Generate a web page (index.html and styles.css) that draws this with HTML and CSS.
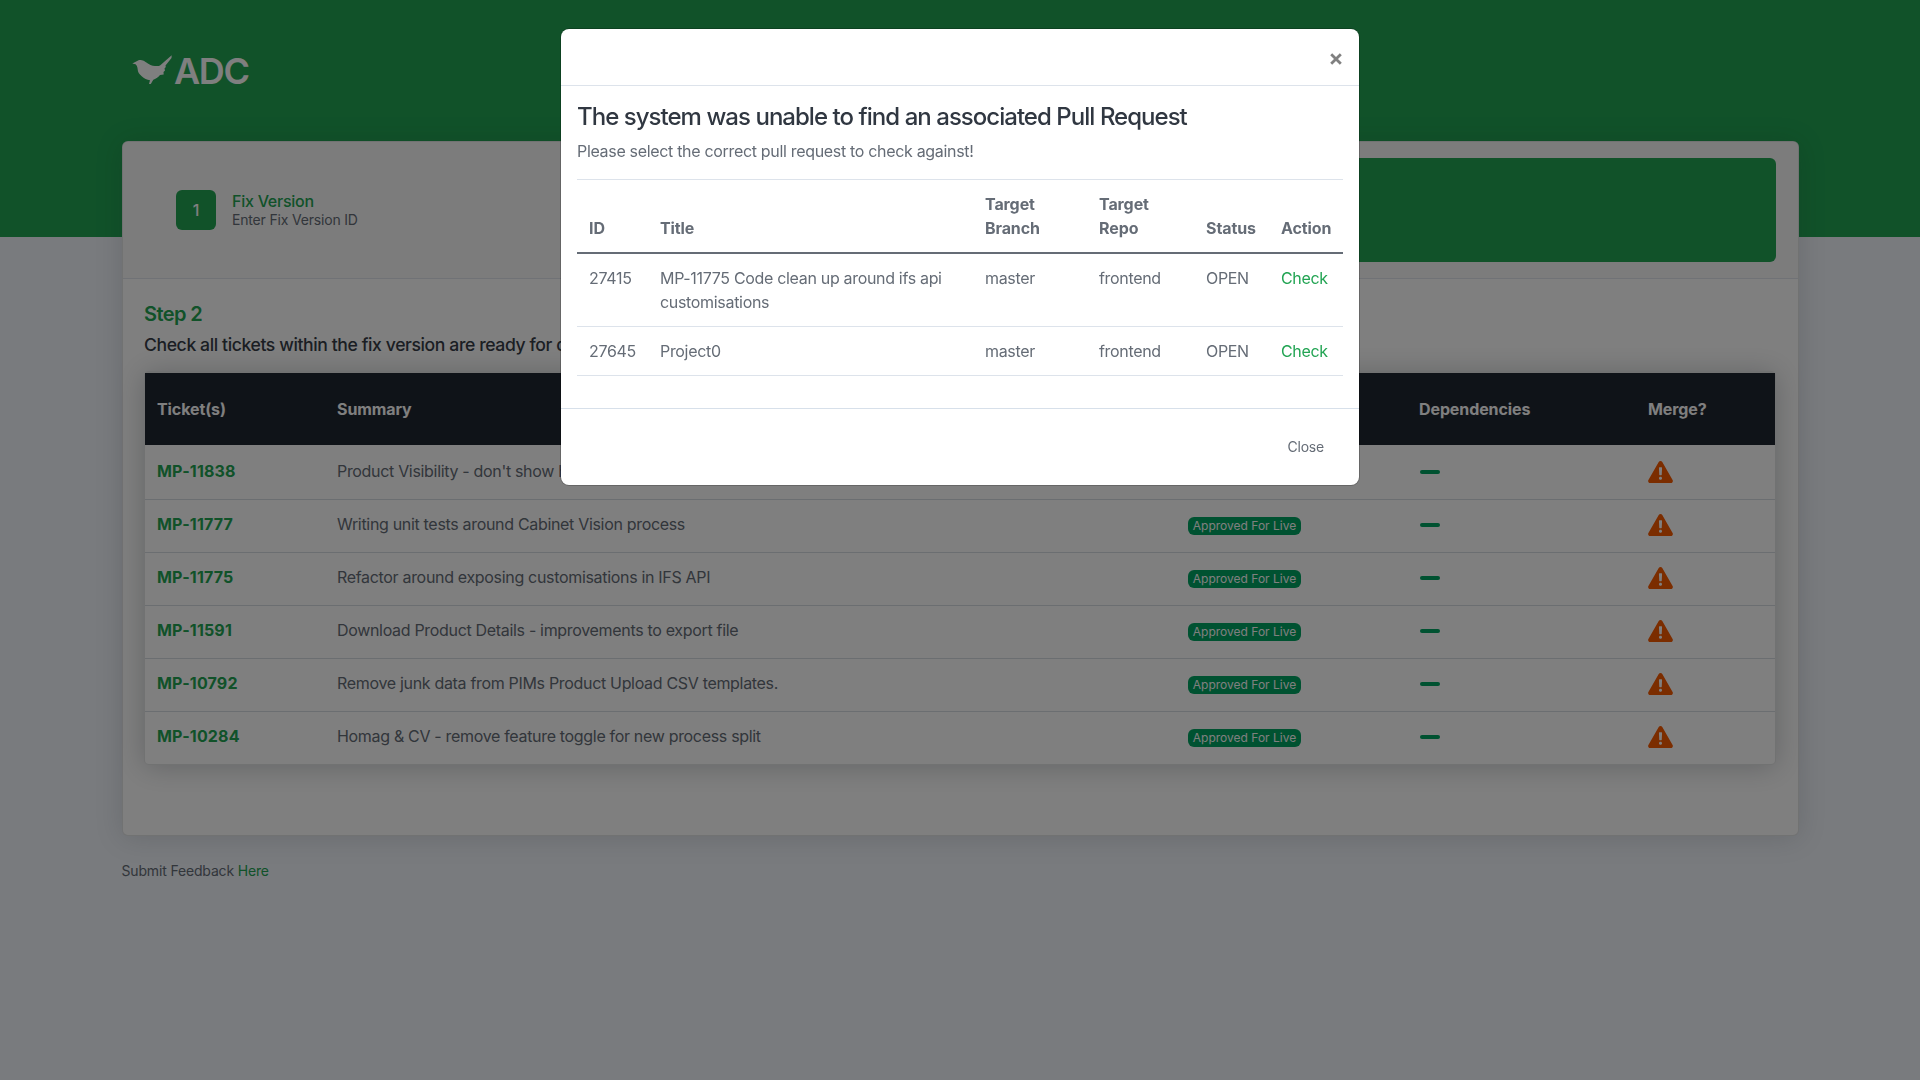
FILE: index.html
```html
<!DOCTYPE html>
<html lang="en">
<head>
<meta charset="utf-8">
<title>ADC</title>
<link rel="stylesheet" href="styles.css">
</head>
<body>
<svg width="0" height="0" class="defs" aria-hidden="true">
  <symbol id="warn" viewBox="0 0 576 512"><path fill="currentColor" d="M569.5 440c18.500 32-4.700 72-41.600 72H48.100c-36.900 0-60-40.100-41.600-72L246.400 24c18.500-32 64.700-32 83.200 0l239.900 416zM288 366c-22 0-36 16-36 36s14 36 36 36 36-16 36-36-14-36-36-36zm-36-205 7 160c.3 6.400 5.600 11.300 12 11.300h34c6.400 0 11.600-5 12-11.300l7-160c.4-6.900-5.100-12.700-12-12.700h-48c-6.900 0-12.300 5.800-12 12.700z"/></symbol>
</svg>
<header class="hero">
  <div class="brand">
    <svg class="bird" viewBox="0 0 40 30"><path d="M.3 8.500 4.700 6.300C6.500 5 8 4.900 9.700 5.200 11.500 5.400 13 6.500 14 7.300 17 9.500 20 10.900 23 11 25 11.200 27 11 28 10.500L39.700.3 39.500 3 33.500 10.500 33.800 12 32.500 13.500 33 15.500 31.500 17 31.700 19.500 28 20C26 22.500 23.500 24.200 21.300 24.700L18.800 29H17L18 25.200C15 24.800 12 23.500 9.700 21.300 7 19 5.800 17 5.700 14.500 5.600 12 4.600 9.800 3.500 9.200Z"/></svg>
    <span>ADC</span>
  </div>
</header>
<main class="card">
  <div class="steps">
    <div class="step">
      <div class="step-num">1</div>
      <div><div class="step-name">Fix Version</div><div class="step-sub">Enter Fix Version ID</div></div>
    </div>
    <div class="step active"></div>
  </div>
  <div class="card-body">
    <h3>Step 2</h3>
    <h5>Check all tickets within the fix version are ready for deployment</h5>
    <div class="tickets">
      <table>
        <colgroup><col class="c1"><col class="c2"><col class="c3"><col class="c4"><col></colgroup>
        <thead><tr><th>Ticket(s)</th><th>Summary</th><th>Status</th><th>Dependencies</th><th>Merge?</th></tr></thead>
        <tbody>
          <tr><td><a>MP-11838</a></td><td>Product Visibility - don't show hidden</td><td><span class="badge">Approved For Live</span></td><td><i class="dash"></i></td><td><svg class="warn"><use href="#warn"/></svg></td></tr>
          <tr><td><a>MP-11777</a></td><td>Writing unit tests around Cabinet Vision process</td><td><span class="badge">Approved For Live</span></td><td><i class="dash"></i></td><td><svg class="warn"><use href="#warn"/></svg></td></tr>
          <tr><td><a>MP-11775</a></td><td>Refactor around exposing customisations in IFS API</td><td><span class="badge">Approved For Live</span></td><td><i class="dash"></i></td><td><svg class="warn"><use href="#warn"/></svg></td></tr>
          <tr><td><a>MP-11591</a></td><td>Download Product Details - improvements to export file</td><td><span class="badge">Approved For Live</span></td><td><i class="dash"></i></td><td><svg class="warn"><use href="#warn"/></svg></td></tr>
          <tr><td><a>MP-10792</a></td><td>Remove junk data from PIMs Product Upload CSV templates.</td><td><span class="badge">Approved For Live</span></td><td><i class="dash"></i></td><td><svg class="warn"><use href="#warn"/></svg></td></tr>
          <tr><td><a>MP-10284</a></td><td>Homag &amp; CV - remove feature toggle for new process split</td><td><span class="badge">Approved For Live</span></td><td><i class="dash"></i></td><td><svg class="warn"><use href="#warn"/></svg></td></tr>
        </tbody>
      </table>
    </div>
  </div>
</main>
<footer class="feedback">Submit Feedback <a>Here</a></footer>
<div class="backdrop">
  <div class="modal">
    <div class="modal-head"><svg class="close" viewBox="0 0 12 12"><path d="M1.200 1.200 10.800 10.800M10.800 1.200 1.200 10.800"/></svg></div>
    <div class="modal-body">
      <h2>The system was unable to find an associated Pull Request</h2>
      <p>Please select the correct pull request to check against!</p>
      <table>
        <colgroup><col class="m1"><col class="m2"><col class="m3"><col class="m4"><col class="m5"><col></colgroup>
        <thead><tr><th>ID</th><th>Title</th><th>Target Branch</th><th>Target<br>Repo</th><th>Status</th><th>Action</th></tr></thead>
        <tbody>
          <tr><td>27415</td><td>MP-11775 Code clean up around ifs api customisations</td><td>master</td><td>frontend</td><td>OPEN</td><td><a>Check</a></td></tr>
          <tr><td>27645</td><td>Project0</td><td>master</td><td>frontend</td><td>OPEN</td><td><a>Check</a></td></tr>
        </tbody>
      </table>
    </div>
    <div class="modal-foot"><span>Close</span></div>
  </div>
</div>
</body>
</html>
```
FILE: styles.css
```css
* { box-sizing: border-box; }
body { margin: 0; height: 1080px; overflow: hidden; background: #f2f6fc; color: #656c76; font: 16px/24px Inter, "Liberation Sans", sans-serif; letter-spacing: -.32px; }
h2, h3, h5, p { margin: 0; }
a { color: #22a453; }
table { border-collapse: separate; border-spacing: 0; table-layout: fixed; width: 100%; }
th, td { text-align: left; }
th { letter-spacing: -.1px; }
.defs { position: absolute; }
.hero { height: 237px; background: #22a453; padding: 50px 0 0 132px; }
.brand { display: flex; align-items: center; height: 42px; color: #fff; font-size: 36px; font-weight: 600; letter-spacing: -1.4px; }
.bird { width: 40px; height: 30px; fill: #fff; margin: -3px 2px 0 0; }
.card { margin: -96px 121px 0 122px; height: 695px; background: #fff; border: 1px solid rgba(33,40,50,.125); border-radius: 6px; box-shadow: 0 2px 28px rgba(33,40,50,.15); }
.steps { display: flex; height: 137px; padding: 16px 22px 16px 21px; background: #f9f9f9; border-bottom: 1px solid #e0e5ec; border-radius: 5px 5px 0 0; }
.step { flex: 1; display: flex; align-items: center; padding-left: 32px; border-radius: 6px; }
.step.active { background: #22a453; }
.step-num { width: 40px; height: 40px; border-radius: 6px; background: #22a453; color: #fff; font-weight: 500; text-align: center; line-height: 40px; margin-right: 16px; }
.step-name { color: #22a453; font-weight: 500; line-height: 19px; letter-spacing: -.25px; }
.step-sub { font-size: 14px; line-height: 18px; letter-spacing: -.18px; }
.card-body { padding: 23px 22px 0 21px; color: #363d47; }
h3 { font-size: 20px; line-height: 24px; font-weight: 600; letter-spacing: -.6px; color: #22a453; }
h5 { font-size: 17.6px; line-height: 21px; font-weight: 500; letter-spacing: -.4px; margin: 8px 0 16px; color: #363d47; }
.tickets { border: 1px solid rgba(33,40,50,.125); border-top-width: 2px; border-radius: 5px; box-shadow: 0 2px 28px rgba(33,40,50,.25); color: #656c76; }
.tickets th { height: 72px; padding: 0 12px; background: #1f2630; color: #fff; font-weight: 700; }
.tickets td { height: 53px; padding: 12px 12px 0; vertical-align: top; border-bottom: 1px solid #d7dce2; }
.tickets tbody tr:first-child td { height: 55px; padding-top: 14px; }
.tickets tbody tr:last-child td { height: 52px; border-bottom: 0; }
.tickets a { font-weight: 700; letter-spacing: .15px; }
.c1 { width: 180px; } .c2 { width: 850px; } .c3 { width: 232px; } .c4 { width: 229px; }
.badge { display: block; width: 113px; height: 18px; margin: 5px 0 0 1px; border-radius: 6px; background: #00a462; color: #fff; font-size: 12px; line-height: 18px; letter-spacing: 0; text-align: center; white-space: nowrap; }
.dash { display: block; width: 20px; height: 3.5px; border-radius: 2px; background: #00a462; margin: 11px 0 0 1px; }
.warn { display: block; width: 25px; height: 22px; margin-top: 1.5px; color: #f75a00; }
.feedback { margin: 23px 0 0 121.5px; font-size: 14px; line-height: 24px; letter-spacing: -.16px; }
.backdrop { position: fixed; inset: 0; background: rgba(0,0,0,.5); }
.modal { width: 798px; height: 456px; margin: 29px 0 0 561px; background: #fff; border-radius: 8px; box-shadow: 0 0 0 1px rgba(0,0,0,.2); }
.modal-head { height: 57px; border-bottom: 1px solid #dde3eb; display: flex; align-items: center; justify-content: flex-end; padding: 3px 17.5px 0 0; }
.close { width: 12px; height: 12px; stroke: #808080; stroke-width: 2.800; }
.modal-body { padding: 16px 16px 0; height: 322px; }
h2 { font-size: 24px; line-height: 29px; font-weight: 500; letter-spacing: -.98px; word-spacing: .1px; color: #303741; white-space: nowrap; }
.modal-body p { margin: 8px 0 16px; }
.modal-body th, .modal-body td { padding: 12px; vertical-align: top; border-top: 1px solid #dde3eb; }
.modal-body th { vertical-align: bottom; font-weight: 700; border-bottom: 2px solid #656c76; }
.modal-body tbody tr:first-child td { border-top: 0; }
.modal-body tbody tr:last-child td { border-bottom: 1px solid #dde3eb; }
.m1 { width: 71px; } .m2 { width: 325px; } .m3 { width: 114px; } .m4 { width: 107px; } .m5 { width: 75px; }
.modal-foot { border-top: 1px solid #d7e0ea; padding: 26px 35px 0; text-align: right; font-size: 14px; letter-spacing: -.2px; }
```
